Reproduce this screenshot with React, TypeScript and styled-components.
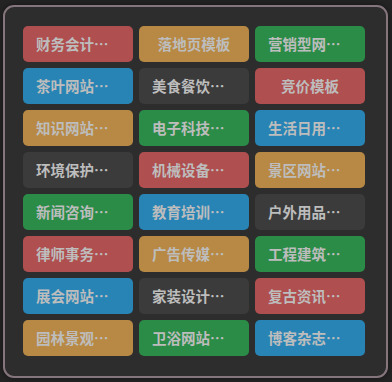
import React from 'react';
import styled, { createGlobalStyle } from 'styled-components';

const GlobalStyle = createGlobalStyle`
  html, body {
    margin: 0;
    padding: 0;
    background: #242424;
  }
  body {
    font-family: 'Noto Sans CJK SC', 'Noto Sans', sans-serif;
  }
`;

type Tone = 'red' | 'orange' | 'green' | 'blue' | 'dark';

const tones: Record<Tone, string> = {
  red: '#b04f4f',
  orange: '#b88944',
  green: '#2b8c47',
  blue: '#2884b5',
  dark: '#3b3b3b',
};

const Page = styled.div`
  width: 392px;
  height: 382px;
  padding: 5px 4px 4px 3px;
  box-sizing: border-box;
`;

const Panel = styled.div`
  width: 385px;
  height: 373px;
  box-sizing: border-box;
  background: #2d2d2d;
  border: 2px solid #85757d;
  border-radius: 11px;
  box-shadow: 0 0 6px rgba(0, 0, 0, 0.45);
  padding: 19px 20px 20px 18px;
`;

const Grid = styled.div`
  display: grid;
  grid-template-columns: repeat(3, 110px);
  grid-auto-rows: 36px;
  gap: 6px;
`;

const Tag = styled.button<{ $tone: Tone }>`
  display: block;
  width: 110px;
  height: 36px;
  margin: 0;
  padding: 0 13px;
  border: none;
  border-radius: 5px;
  background: ${({ $tone }) => tones[$tone]};
  color: #bdbdbd;
  font-family: 'Noto Sans CJK SC', 'Noto Sans', sans-serif;
  font-size: 14.5px;
  font-weight: 700;
  line-height: 36px;
  text-align: center;
  white-space: nowrap;
  overflow: hidden;
  text-overflow: ellipsis;
  cursor: pointer;
`;

const items: { label: string; tone: Tone }[] = [
  { label: '财务会计网站', tone: 'red' },
  { label: '落地页模板', tone: 'orange' },
  { label: '营销型网站模板', tone: 'green' },
  { label: '茶叶网站模板', tone: 'blue' },
  { label: '美食餐饮网站', tone: 'dark' },
  { label: '竞价模板', tone: 'red' },
  { label: '知识网站模板', tone: 'orange' },
  { label: '电子科技网站', tone: 'green' },
  { label: '生活日用网站', tone: 'blue' },
  { label: '环境保护网站', tone: 'dark' },
  { label: '机械设备网站', tone: 'red' },
  { label: '景区网站模板', tone: 'orange' },
  { label: '新闻咨询网站', tone: 'green' },
  { label: '教育培训网站', tone: 'blue' },
  { label: '户外用品网站', tone: 'dark' },
  { label: '律师事务所网站', tone: 'red' },
  { label: '广告传媒网站', tone: 'orange' },
  { label: '工程建筑网站', tone: 'green' },
  { label: '展会网站模板', tone: 'blue' },
  { label: '家装设计网站', tone: 'dark' },
  { label: '复古资讯网站', tone: 'red' },
  { label: '园林景观网站', tone: 'orange' },
  { label: '卫浴网站模板', tone: 'green' },
  { label: '博客杂志网站', tone: 'blue' },
];

const App = () => {
  return (
    <Page>
      <GlobalStyle />
      <Panel>
        <Grid>
          {items.map(({ label, tone }) => (
            <Tag key={label} $tone={tone} title={label}>
              {label}
            </Tag>
          ))}
        </Grid>
      </Panel>
    </Page>
  );
};

export default App;
